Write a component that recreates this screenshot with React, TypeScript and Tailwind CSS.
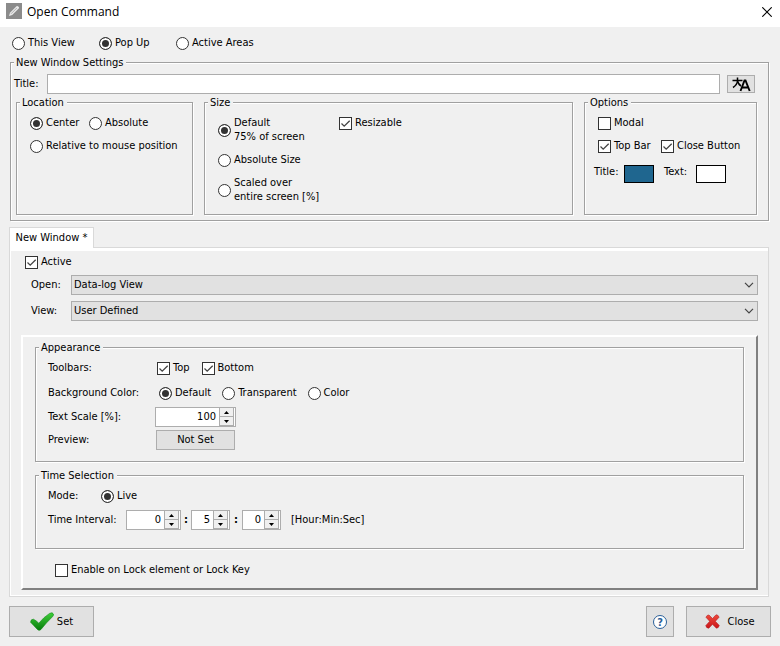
import React, { useId } from "react";

type ChoiceProps = { label: React.ReactNode; name?: string; checked?: boolean };

function Radio({ label, name, checked }: ChoiceProps) {
  return (
    <label className="flex items-center gap-[3px] whitespace-nowrap">
      <input
        type="radio"
        name={name}
        defaultChecked={checked}
        className="size-[13px] shrink-0 appearance-none rounded-full border border-[#333] bg-white checked:bg-[#333] checked:shadow-[inset_0_0_0_2px_#fff]"
      />
      <span>{label}</span>
    </label>
  );
}

function Check({ label, checked }: ChoiceProps) {
  return (
    <label className="flex items-center gap-[3px] whitespace-nowrap">
      <span className="grid size-[13px] shrink-0">
        <input
          type="checkbox"
          defaultChecked={checked}
          className="peer col-start-1 row-start-1 size-[13px] appearance-none border border-[#333] bg-white"
        />
        <svg
          viewBox="0 0 13 13"
          className="pointer-events-none col-start-1 row-start-1 hidden size-[13px] peer-checked:block"
          fill="none"
          stroke="#444"
          strokeWidth="1.3"
        >
          <path d="M2.5 6.5 L5.2 9.2 L10.7 3.7" />
        </svg>
      </span>
      <span>{label}</span>
    </label>
  );
}

function Group({ title, className, children }: { title: string; className: string; children: React.ReactNode }) {
  return (
    <fieldset
      className={
        "min-w-0 border border-[#a0a0a0] shadow-[1px_1px_0_#fff,inset_1px_1px_0_#fff] " + className
      }
    >
      <legend className="ml-[3px] bg-[#f0f0f0] pr-[3px] pl-0.5 leading-[13px]">{title}</legend>
      {children}
    </fieldset>
  );
}

function Drop({ label, value }: { label: string; value: string }) {
  const id = useId();
  return (
    <div className="grid grid-cols-[40px_1fr] items-center">
      <label htmlFor={id}>{label}</label>
      <div className="grid items-center">
        <select
          id={id}
          className="col-start-1 row-start-1 h-5 appearance-none border border-[#adadad] bg-[#e1e1e1] px-0.5"
        >
          <option>{value}</option>
        </select>
        <svg
          viewBox="0 0 10 6"
          className="pointer-events-none col-start-1 row-start-1 mr-1 h-1.5 w-2.5 justify-self-end"
          fill="none"
          stroke="#444"
          strokeWidth="1.2"
        >
          <path d="M1 0.8 L5 4.8 L9 0.8" />
        </svg>
      </div>
    </div>
  );
}

function Spin({ label, value, className, id }: { label: string; value: string; className: string; id?: string }) {
  return (
    <div className={"flex h-5 border border-[#adadad] bg-white " + className}>
      <input id={id} aria-label={label} defaultValue={value} className="w-0 min-w-0 flex-1 bg-white pr-[3px] text-right" />
      <div className="flex w-4 flex-col border-r border-white bg-[#f0f0f0]">
        <button aria-label={label + " up"} className="grid flex-1 place-items-center border-x border-b border-[#adadad]">
          <svg viewBox="0 0 5 3" className="h-[3px] w-[5px]">
            <path d="M0 3 L2.5 0 L5 3 Z" />
          </svg>
        </button>
        <button aria-label={label + " down"} className="grid flex-1 place-items-center border-x border-b border-[#adadad]">
          <svg viewBox="0 0 5 3" className="h-[3px] w-[5px]">
            <path d="M0 0 L2.5 3 L5 0 Z" />
          </svg>
        </button>
      </div>
    </div>
  );
}

export default function App() {
  return (
    <div className="min-h-screen bg-[#f0f0f0] font-['DejaVu_Sans_Condensed','DejaVu_Sans',sans-serif] text-[11px] leading-[14px] text-black">
      <header className="flex h-[27px] items-start gap-[5px] bg-white pt-[3px] pr-2 pl-1.5">
        <svg viewBox="0 0 16 16" className="size-4">
          <rect width="16" height="16" fill="#8b8b8b" />
          <path d="M3 13 L4 9.8 L10.5 3.3 Q11.3 2.6 12.2 3.4 L12.8 4 Q13.4 4.8 12.7 5.6 L6.2 12 Z" fill="#e9e9e9" />
          <path d="M5 10.8 L10.8 5" stroke="#a8a8a8" strokeWidth="0.9" />
        </svg>
        <h1 className="flex-1 font-['Open_Sans',sans-serif] text-[12px] leading-[18px]">Open Command</h1>
        <button aria-label="Close window" className="grid h-[18px] place-items-center">
          <svg viewBox="0 0 10 10" className="size-2.5" stroke="#000" strokeWidth="1.1">
            <path d="M0.3 0.3 L9.7 9.7 M9.7 0.3 L0.3 9.7" />
          </svg>
        </button>
      </header>

      <main className="pr-[11px] pl-[9px]">
        <div className="grid grid-cols-[87px_77px_auto] pt-[9px] pb-1.5 pl-[3px]">
          <Radio name="target" label="This View" />
          <Radio name="target" label="Pop Up" checked />
          <Radio name="target" label="Active Areas" />
        </div>

        <Group title="New Window Settings" className="ml-px pb-[5px]">
          <div className="flex items-center pt-[5px] pr-[13px] pl-[3px]">
            <label htmlFor="title" className="w-[33px]">
              Title:
            </label>
            <input id="title" className="h-5 min-w-0 flex-1 border border-[#adadad] bg-white px-1" />
            <button
              aria-label="Translate"
              className="ml-[7px] grid h-[18px] w-7 place-items-center border border-[#adadad] bg-[#e1e1e1]"
            >
              <svg viewBox="0 0 19 15" className="h-[15px] w-[19px]" fill="none" stroke="#000">
                <path d="M0.5 3.5 H10.5 M5.5 0.5 V4 Q5 8 1 10.5 M5.5 4 Q6.5 7.5 9 9" strokeWidth="1.5" />
                <path d="M8.5 14 L12.5 3.5 H13.5 L17.7 14 M10 10.5 H16.3" strokeWidth="1.9" />
              </svg>
            </button>
          </div>
          <div className="flex gap-[11px] pt-0.5 pr-[11px] pl-[5px]">
            <Group title="Location" className="w-[177px]">
              <div className="flex flex-col gap-[9px] pt-[7px] pl-[13px]">
                <div className="grid grid-cols-[59px_auto]">
                  <Radio name="location" label="Center" checked />
                  <Radio name="location" label="Absolute" />
                </div>
                <Radio name="location" label="Relative to mouse position" />
              </div>
            </Group>
            <Group title="Size" className="flex-1">
              <div className="grid grid-cols-[121px_auto] pt-[7px] pb-2.5 pl-[13px]">
                <div className="flex flex-col gap-[9px]">
                  <Radio name="size" checked label={<>Default<br />75% of screen</>} />
                  <Radio name="size" label="Absolute Size" />
                  <Radio name="size" label={<>Scaled over<br />entire screen [%]</>} />
                </div>
                <div>
                  <Check label="Resizable" checked />
                </div>
              </div>
            </Group>
            <Group title="Options" className="w-[173px]">
              <div className="grid grid-cols-[63px_auto] gap-y-[9px] pt-[7px] pl-[13px]">
                <div className="col-span-2">
                  <Check label="Modal" />
                </div>
                <Check label="Top Bar" checked />
                <Check label="Close Button" checked />
              </div>
              <div className="flex pt-3 pl-[9px]">
                <span className="w-[30px]">Title:</span>
                <button aria-label="Title color" className="mr-2.5 h-[18px] w-[30px] border border-black bg-[#1f668f]" />
                <span className="w-8">Text:</span>
                <button aria-label="Text color" className="h-[18px] w-[30px] border border-black bg-white" />
              </div>
            </Group>
          </div>
        </Group>

        <div role="tablist" className="flex pt-1.5">
          <button
            role="tab"
            aria-selected="true"
            className="relative -mb-px h-[21px] w-[85px] border border-b-0 border-[#d9d9d9] bg-white"
          >
            New Window *
          </button>
        </div>
        <section className="border border-[#d9d9d9] pt-[7px] pr-2.5 pb-1.5 pl-[11px] shadow-[inset_0_3px_0_#fff,inset_1px_-1px_0_#fff]">
          <div className="flex flex-col gap-1.5">
            <div className="flex pl-1">
              <Check label="Active" checked />
            </div>
            <div className="flex flex-col gap-1.5 pl-2.5">
              <Drop label="Open:" value="Data-log View" />
              <Drop label="View:" value="User Defined" />
            </div>
          </div>

          <div className="mt-3.5 border-2 border-t-white border-r-[#808080] border-b-[#808080] border-l-white px-3 pt-1 pb-[11px]">
            <Group title="Appearance" className="pb-[11px]">
              <div className="grid grid-cols-[107px_1fr] pt-[7px] pl-3">
                <span>Toolbars:</span>
                <div className="flex gap-3 pl-0.5">
                  <Check label="Top" checked />
                  <Check label="Bottom" checked />
                </div>
                <span className="mt-[11px]">Background Color:</span>
                <div className="mt-[11px] flex gap-[11px] pl-1">
                  <Radio name="background" label="Default" checked />
                  <Radio name="background" label="Transparent" />
                  <Radio name="background" label="Color" />
                </div>
                <label htmlFor="scale" className="mt-[7px] self-center">
                  Text Scale [%]:
                </label>
                <Spin id="scale" label="Text scale" value="100" className="mt-[7px] w-[81px]" />
                <span className="mt-[3px] self-center">Preview:</span>
                <button className="mt-[3px] ml-px h-5 w-[79px] border border-[#adadad] bg-[#e1e1e1]">Not Set</button>
              </div>
            </Group>

            <Group title="Time Selection" className="mt-[7px] pb-[18px]">
              <div className="flex flex-col gap-[7px] pt-[7px] pl-3">
                <div className="flex">
                  <span className="w-[53px]">Mode:</span>
                  <Radio name="mode" label="Live" checked />
                </div>
                <div className="flex items-center">
                  <span className="w-[78px]">Time Interval:</span>
                  <Spin label="Hours" value="0" className="w-[55px]" />
                  <span className="w-2.5 text-center font-bold">:</span>
                  <Spin label="Minutes" value="5" className="w-[39px]" />
                  <span className="w-3 text-center font-bold">:</span>
                  <Spin label="Seconds" value="0" className="w-[39px]" />
                  <span className="ml-2.5">[Hour:Min:Sec]</span>
                </div>
              </div>
            </Group>

            <div className="flex pt-3.5 pl-5">
              <Check label="Enable on Lock element or Lock Key" />
            </div>
          </div>
        </section>
      </main>

      <footer className="flex items-center px-[9px] py-[9px]">
        <button className="flex h-[31px] w-[85px] items-center justify-center gap-[3px] border border-[#adadad] bg-[#e1e1e1]">
          <svg viewBox="0 0 24 20" className="h-5 w-6">
            <defs>
              <linearGradient id="tick" x1="0" y1="0" x2="0" y2="1">
                <stop offset="0" stopColor="#3fd03a" />
                <stop offset="1" stopColor="#077a0b" />
              </linearGradient>
            </defs>
            <path
              d="M0.6 10.2 Q0.8 7 3.4 7.2 Q6 8.4 8.8 11.2 Q13.6 5.2 19.6 1.4 Q22.6 -0.2 23.4 2 Q23.8 3.6 22.4 4.8 Q16.4 10.6 11 17.4 Q9.2 19.2 7.4 17.4 Q3.6 13.4 0.6 10.2 Z"
              fill="url(#tick)"
              stroke="#0b8a12"
              strokeWidth="0.6"
            />
          </svg>
          Set
        </button>
        <button
          aria-label="Help"
          className="ml-auto grid h-[31px] w-7 place-items-center border border-[#adadad] bg-[#e1e1e1]"
        >
          <span className="grid size-[14px] place-items-center rounded-full border border-[#2a6099] bg-white font-bold text-[#2a6099]">
            ?
          </span>
        </button>
        <button className="ml-3 flex h-[31px] w-[85px] items-center justify-center gap-2 border border-[#adadad] bg-[#e1e1e1] pl-0.5">
          <svg viewBox="0 0 16 16" className="size-[15px]">
            <defs>
              <linearGradient id="cross" x1="0" y1="0" x2="0" y2="1">
                <stop offset="0" stopColor="#ef4a3c" />
                <stop offset="1" stopColor="#c9161a" />
              </linearGradient>
            </defs>
            <path
              d="M1 3.4 Q2 1 4.2 1 L8 4.8 L11.8 0.8 Q14.4 1 15 3.4 L11 7.8 L15.2 12.2 Q14.6 14.8 12.2 15.2 L8 11 L4 15.2 Q1.4 15 0.8 12.4 L5 7.8 Z"
              fill="url(#cross)"
              stroke="#b3161a"
              strokeWidth="0.6"
              strokeLinejoin="round"
            />
          </svg>
          Close
        </button>
      </footer>
    </div>
  );
}
